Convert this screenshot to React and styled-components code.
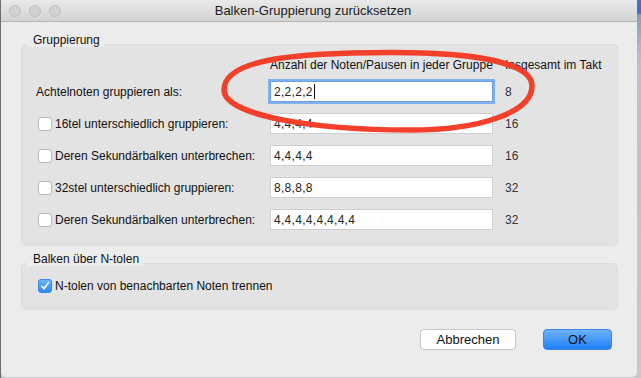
import React from 'react';
import styled, { createGlobalStyle } from 'styled-components';

const Global = createGlobalStyle`
  html, body { margin: 0; padding: 0; }
  body {
    width: 641px;
    height: 378px;
    overflow: hidden;
    font-family: "Liberation Sans", Arial, sans-serif;
    background: linear-gradient(to bottom, #3f6fcf 0, #3f6fcf 14px, #8c9bb4 14px, #b9c0cb 60px, #c7c9cc 100%);
  }
`;

const Screen = styled.div`
  display: flex;
  width: 641px;
  height: 378px;
  background: linear-gradient(to right, #6a6d72 0, #6a6d72 1px, transparent 1px);
`;

const Window = styled.div`
  position: relative;
  margin-left: 1px;
  width: 636px;
  height: 377px;
  background: #ececec;
  border-radius: 0 0 5px 5px;
  display: flex;
  flex-direction: column;
  overflow: hidden;
`;

const TitleBar = styled.div`
  flex: none;
  box-sizing: border-box;
  height: 22px;
  border-bottom: 1px solid #b4b4b4;
  background: linear-gradient(to bottom, #e9e9e9, #d3d3d3);
  display: grid;
  grid-template-columns: 80px 1fr 80px;
  align-items: center;
  padding-right: 12px;
`;

const Lights = styled.div`
  display: flex;
  gap: 8px;
  padding-left: 8px;
`;

const Light = styled.span`
  width: 12px;
  height: 12px;
  box-sizing: border-box;
  border-radius: 50%;
  background: #d1d1d1;
  border: 1px solid #bfbfbf;
`;

const Title = styled.div`
  text-align: center;
  font-size: 13px;
  line-height: 16px;
  color: #1a1a1a;
  white-space: nowrap;
`;

const Content = styled.div`
  flex: 1;
  display: flex;
  flex-direction: column;
  padding: 11px 19px 0 20px;
`;

const Legend = styled.div`
  position: relative;
  z-index: 1;
  align-self: flex-start;
  margin: ${(p) => p.$top || 0}px 0 -3px 5px;
  padding: 0 4px 0 7px;
  background: #ececec;
  font-size: 12px;
  line-height: 14px;
  color: #111;
  white-space: nowrap;
`;

const Box = styled.div`
  box-sizing: border-box;
  background: #e3e3e3;
  border: 1px solid #dbdbdb;
  border-radius: 5px;
  padding: ${(p) => p.$pad};
`;

const Grid = styled.div`
  display: grid;
  grid-template-columns: 222px 223px 1fr;
  column-gap: 12px;
  align-items: center;
`;

const HeaderGrid = styled(Grid)`
  margin-bottom: 9px;
  font-size: 12px;
  line-height: 14px;
  color: #111;
  white-space: nowrap;
`;

const RowsGrid = styled(Grid)`
  grid-auto-rows: 21px;
  row-gap: 11px;
`;

const Label = styled.label`
  display: flex;
  align-items: center;
  gap: 3px;
  padding-left: ${(p) => (p.$check ? 2 : 0)}px;
  font-size: 12px;
  color: #111;
  white-space: nowrap;
`;

const Check = styled.span`
  flex: none;
  box-sizing: border-box;
  width: 14px;
  height: 14px;
  border-radius: 3px;
  display: flex;
  align-items: center;
  justify-content: center;
  background: ${(p) => (p.$on ? 'linear-gradient(to bottom, #6cb4fb, #2e88f6)' : '#ffffff')};
  border: 1px solid ${(p) => (p.$on ? '#3a86e8' : '#b9b9b9')};
`;

const Field = styled.div`
  box-sizing: border-box;
  height: 21px;
  background: #ffffff;
  border: 1px solid ${(p) => (p.$focus ? '#6a9ee6' : '#cfcfcf')};
  padding: 0 3px;
  display: flex;
  align-items: center;
  font-size: 12px;
  letter-spacing: 0.3px;
  color: #222;
  white-space: nowrap;
  overflow: hidden;
  box-shadow: ${(p) => (p.$focus ? '0 0 0 2px #80b1ee' : 'none')};
`;

const Caret = styled.span`
  display: inline-block;
  width: 1px;
  height: 15px;
  background: #111;
  margin-left: 1px;
`;

const Total = styled.div`
  font-size: 12px;
  color: #333;
`;

const Buttons = styled.div`
  display: flex;
  justify-content: flex-end;
  gap: 27px;
  margin: 19px 6px 0 0;
`;

const Button = styled.button`
  box-sizing: border-box;
  height: 21px;
  width: ${(p) => p.$w}px;
  border-radius: 4px;
  font-family: "Liberation Sans", Arial, sans-serif;
  font-size: 13px;
  color: #111;
  padding: 0;
  border: 1px solid ${(p) => (p.$primary ? '#3a85e6' : '#c6c6c6')};
  background: ${(p) => (p.$primary ? 'linear-gradient(to bottom, #6db2fb, #1f7ff6)' : '#ffffff')};
`;

const Ellipse = styled.svg`
  position: absolute;
  left: 0;
  top: 0;
  pointer-events: none;
  z-index: 5;
`;

const rows = [
  { label: 'Achtelnoten gruppieren als:', value: '2,2,2,2', total: '8', focus: true },
  { label: '16tel unterschiedlich gruppieren:', value: '4,4,4,4', total: '16', check: true },
  { label: 'Deren Sekundärbalken unterbrechen:', value: '4,4,4,4', total: '16', check: true },
  { label: '32stel unterschiedlich gruppieren:', value: '8,8,8,8', total: '32', check: true },
  { label: 'Deren Sekundärbalken unterbrechen:', value: '4,4,4,4,4,4,4,4', total: '32', check: true },
];

const CheckMark = () => (
  <svg width="10" height="10" viewBox="0 0 10 10">
    <path d="M1.8 5.4 L4 7.8 L8.4 1.6" fill="none" stroke="#fff" strokeWidth="1.6" strokeLinecap="round" strokeLinejoin="round" />
  </svg>
);

const ellipsePath =
  'M223 90 C223 62 280 52.5 390 52.5 C480 52.5 531 64 531 86 ' +
  'C531 112 480 130 410 130 C310 130 223 115 223 90 Z';

export default function App() {
  return (
    <Screen>
      <Global />
      <Window>
        <TitleBar>
          <Lights>
            <Light />
            <Light />
            <Light />
          </Lights>
          <Title>Balken-Gruppierung zurücksetzen</Title>
          <span />
        </TitleBar>
        <Content>
          <Legend>Gruppierung</Legend>
          <Box $pad="13px 14px 15px 14px">
            <HeaderGrid>
              <span />
              <span>Anzahl der Noten/Pausen in jeder Gruppe</span>
              <span>Insgesamt im Takt</span>
            </HeaderGrid>
            <RowsGrid>
              {rows.map((r, i) => (
                <React.Fragment key={i}>
                  <Label $check={r.check}>
                    {r.check && <Check />}
                    {r.label}
                  </Label>
                  <Field $focus={r.focus}>
                    {r.value}
                    {r.focus && <Caret />}
                  </Field>
                  <Total>{r.total}</Total>
                </React.Fragment>
              ))}
            </RowsGrid>
          </Box>
          <Legend $top={6}>Balken über N-tolen</Legend>
          <Box $pad="15px 14px 16px 16px">
            <Label>
              <Check $on>
                <CheckMark />
              </Check>
              N-tolen von benachbarten Noten trennen
            </Label>
          </Box>
          <Buttons>
            <Button $w={96}>Abbrechen</Button>
            <Button $w={69} $primary>OK</Button>
          </Buttons>
        </Content>
        <Ellipse width="636" height="377" viewBox="0 0 636 377">
          <path d={ellipsePath} fill="none" stroke="#f3402b" strokeWidth="5.5" />
        </Ellipse>
      </Window>
    </Screen>
  );
}
